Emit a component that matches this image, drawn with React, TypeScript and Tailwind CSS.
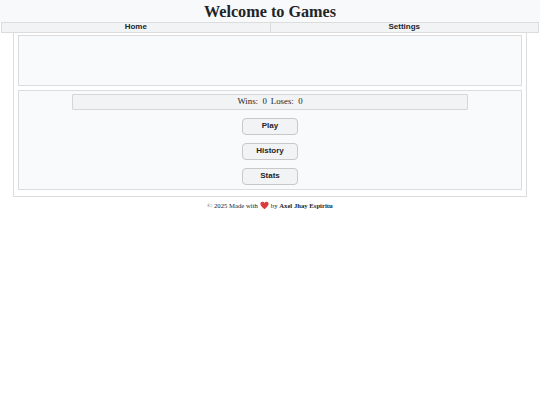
import React from 'react';

const menuButtons = ['Play', 'History', 'Stats'];

export default function App() {
  return (
    <div className="min-h-[405px] bg-white font-['Liberation_Serif',serif] text-[#212529] antialiased">
      <header className="h-[22px] bg-[#f8f9fb] text-center">
        <h1 className="text-[16.2px] leading-[24px] font-bold">Welcome to Games</h1>
      </header>

      <nav className="mx-px flex h-[11px] font-['Liberation_Sans',sans-serif] text-[8px] leading-[8px] font-bold">
        <a className="flex-1 border border-[#dcdcdc] bg-[#f2f3f5] text-center">Home</a>
        <a className="flex-1 border border-l-0 border-[#dcdcdc] bg-[#f2f3f5] text-center">Settings</a>
      </nav>

      <main className="mx-[13px] flex h-[164px] flex-col gap-1 border border-t-0 border-[#dcdcdc] px-1 pt-[2px] pb-[6px]">
        <section className="h-[51px] border border-[#dcdcdc] bg-[#f9fafc]" />
        <section className="flex flex-1 flex-col items-center border border-[#dcdcdc] bg-[#f9fafc] pt-[3px]">
          <div className="flex h-4 w-[396px] items-center justify-center gap-[4px] rounded-[1px] border border-[#d6d6d6] bg-[#f2f3f5] text-[8.8px]">
            <span>Wins:&nbsp; 0</span>
            <span>Loses:&nbsp; 0</span>
          </div>
          <div className="mt-2 flex flex-col gap-2">
            {menuButtons.map(label => (
              <button
                key={label}
                type="button"
                className="h-[17px] w-14 rounded-[4px] border border-[#c8c8c8] bg-[#f2f3f5] pb-px font-['Liberation_Sans',sans-serif] text-[8px] font-bold"
              >
                {label}
              </button>
            ))}
          </div>
        </section>
      </main>

      <footer className="mt-[4px] flex items-center justify-center gap-[2px] text-[6.7px] leading-[9px]">
        <span>&copy; 2025 Made with</span>
        <svg viewBox="0 0 24 24" className="h-[9px] w-[9px] fill-[#dd3b3b]">
          <path d="M12 22 C5 16 1 12 1 7.5 C1 4 3.7 2 6.5 2 C8.8 2 10.8 3.2 12 5.5 C13.2 3.2 15.2 2 17.5 2 C20.3 2 23 4 23 7.5 C23 12 19 16 12 22 Z" />
        </svg>
        <span>by <b>Axel Jhay Espiritu</b></span>
      </footer>
    </div>
  );
}
